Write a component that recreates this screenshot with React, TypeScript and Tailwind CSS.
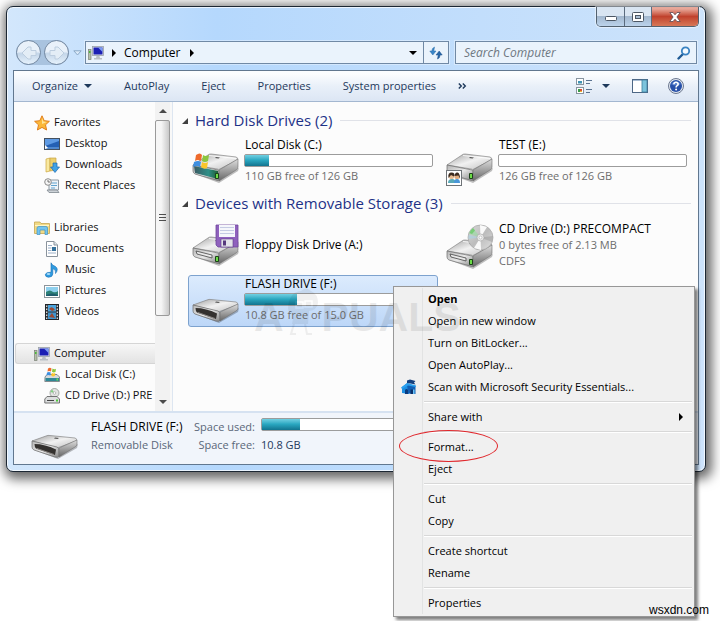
import type { ReactNode } from 'react';
import clsx from 'clsx';

type DriveKind = 'windows' | 'shared' | 'floppy' | 'cd' | 'flash';

/* ---------- drives ---------- */

function DriveBody({ kind }: { kind: DriveKind }) {
  return (
    <g>
      <path d="M3 24 27 33 46 21 47 18 28 29Z" fill="#000" opacity=".25" />
      <path d="M1 15 16 5Q17 4 19 4L44 7Q47 8 45 10L28 19Q27 20 25 19Z" fill="url(#driveTop)" stroke="#858585" strokeWidth=".7" />
      <path d="M1 15 26 20Q27 20 27 22V30Q26 31 24 30L3 24Q1 23 1 21Z" fill="url(#driveFront)" stroke="#6b6b6b" strokeWidth=".7" />
      <path d="M27 20 46 9V17Q46 19 44 20L27 31Z" fill="url(#driveSide)" stroke="#6f6f6f" strokeWidth=".6" />
      <path d="m24 7 4 .5-1.500 1-3.500-.5Z" fill="#555" />
      <path d="M17 5.500 44 8.500" stroke="#fff" strokeWidth="1" opacity=".8" />
      {kind === 'windows' && <path d="M2 16 26 21V29L3 23Z" fill="url(#driveTeal)" />}
      {(kind === 'cd' || kind === 'floppy') && (
        <path d="M4 18 20 22V25L5 21Z" fill="#e9e9e9" stroke="#444" strokeWidth=".8" />
      )}
      <rect x="23" y="23" width="4" height="6" rx="1" fill="#1c4318" />
      <rect x="24" y="24" width="2" height="4" fill="#6bdc46" />
    </g>
  );
}

function FlashBody() {
  return (
    <g>
      <path d="M3 37 27 46 46 35 47 31 28 42Z" fill="#000" opacity=".25" />
      <path d="M1 28 15 23Q17 22 19 22.500L44 25Q47 26 45 28L29 34Q27 35 25 34.500Z" fill="url(#driveTop)" stroke="#858585" strokeWidth=".7" />
      <path d="M1 28 26 34Q28 35 28 37V43Q27 45 24 44L3 37Q1 36 1 34Z" fill="url(#driveFront)" stroke="#6b6b6b" strokeWidth=".7" />
      <path d="M28 35 46 27V31Q46 33 44 34L28 44Z" fill="url(#driveSide)" stroke="#6f6f6f" strokeWidth=".6" />
      <path d="M3.500 31Q14 31 25 36.500L24 42 5 35.500Q3.500 34 3.500 31Z" fill="#34312f" />
      <path d="M6 35.500 23 41.500" stroke="#8a8683" strokeWidth="1" />
      <path d="m24 24.500 4 .5-1.500 1-3.500-.5Z" fill="#555" />
    </g>
  );
}

function DriveIcon({ kind, className }: { kind: DriveKind; className?: string }) {
  return (
    <svg viewBox="0 0 48 48" className={clsx('size-12 shrink-0', className)} aria-hidden="true">
      {kind === 'flash' ? (
        <FlashBody />
      ) : (
        <g transform={kind === 'cd' ? 'translate(0 15)' : 'translate(0 12)'}>
          <DriveBody kind={kind} />
        </g>
      )}
      {kind === 'windows' && (
        <g>
          <path d="M4 17Q8 14 10 17L9 23Q6 21 3 23Z" fill="#ee6a2c" />
          <path d="M11 17Q14 19 17 17L16 23Q13 25 10 23Z" fill="#8cc63e" />
          <path d="M2 24Q6 22 9 24L8 29Q5 27 1 29Z" fill="#3f8fe0" />
          <path d="M10 24Q13 26 16 24L15 30Q12 32 9 29Z" fill="#fbc62b" />
        </g>
      )}
      {kind === 'shared' && (
        <g>
          <rect x=".5" y="32.500" width="15" height="15" fill="#fff" stroke="#6f7478" />
          <path d="M2 45Q2 41 6 41T9 45Z" fill="#58a9b8" />
          <path d="M8 45Q8 41 11 41T14 45Z" fill="#4a96d8" />
          <circle cx="5.500" cy="38.500" r="2.600" fill="#e8bd93" />
          <circle cx="11" cy="38.500" r="2.600" fill="#e0ad80" />
          <path d="M2.500 40Q1.500 34.500 5.500 34.500T8 38.500L5 37ZM8.500 38Q9 34 11.500 34.500T14 41L12.500 37.500Z" fill="#3c2b1f" />
        </g>
      )}
      {kind === 'floppy' && (
        <g>
          <path d="M24 4H46V26H26L24 24Z" fill="#8f61bd" stroke="#6f479d" strokeWidth=".8" />
          <rect x="27" y="4" width="16" height="12" fill="#f5f6fb" />
          <path d="M28 6.500H42M28 9.500H42M28 12.500H42" stroke="#c5cbe4" />
          <rect x="29" y="18" width="12" height="8" fill="#e3e3e9" stroke="#5d3b88" strokeWidth=".6" />
          <rect x="31" y="19.500" width="3" height="5" fill="#56387d" />
        </g>
      )}
      {kind === 'cd' && (
        <g>
          <circle cx="34.500" cy="16.500" r="12.500" fill="url(#disc)" stroke="#a5a5a5" strokeWidth=".7" />
          <path d="M34.500 16.500 23 13Q24 9 27 7Z" fill="#9ed8a6" opacity=".7" />
          <path d="M23.500 12Q24.500 9 27 7L29 9.500 26 13Z" fill="#62c95e" opacity=".7" />
          <path d="M34.500 16.500 22.500 18V14Z" fill="#a9d3e6" opacity=".6" />
          <path d="M34.500 16.500 34 4 41 6Z" fill="#fff" opacity=".9" />
          <path d="M34.500 16.500 35 29 28 27Z" fill="#fff" opacity=".9" />
          <path d="M34.500 16.500 47 15 46 21Z" fill="#8f8f8f" opacity=".4" />
          <circle cx="34.500" cy="16.500" r="3.500" fill="#ededed" stroke="#aaa" strokeWidth=".7" />
          <circle cx="34.500" cy="16.500" r="1.500" fill="#fff" stroke="#aaa" strokeWidth=".6" />
        </g>
      )}
    </svg>
  );
}

// gradients shared by every drive drawing
function DriveGradients() {
  return (
    <svg className="absolute size-0" aria-hidden="true">
      <defs>
        <linearGradient id="driveTop" x1="0" x2="1" y1="0" y2="1">
          <stop offset="0" stopColor="#9d9d9d" />
          <stop offset=".5" stopColor="#f1f1f1" />
          <stop offset="1" stopColor="#c0c0c0" />
        </linearGradient>
        <linearGradient id="driveFront" x1="0" x2="1" y1="0" y2="1">
          <stop offset="0" stopColor="#b5b5b5" />
          <stop offset=".5" stopColor="#e8e8e8" />
          <stop offset="1" stopColor="#858585" />
        </linearGradient>
        <linearGradient id="driveSide" x1="0" x2="0" y1="0" y2="1">
          <stop offset="0" stopColor="#dedede" />
          <stop offset="1" stopColor="#666" />
        </linearGradient>
        <linearGradient id="driveTeal" x1="0" x2="1" y1="0" y2="0">
          <stop offset="0" stopColor="#3a5a62" />
          <stop offset=".6" stopColor="#2f8f88" />
          <stop offset="1" stopColor="#1d5d35" />
        </linearGradient>
        <linearGradient id="disc" x1="0" x2="1" y1="0" y2="1">
          <stop offset="0" stopColor="#d8d8d8" />
          <stop offset=".5" stopColor="#bdbdbd" />
          <stop offset="1" stopColor="#dedede" />
        </linearGradient>
      </defs>
    </svg>
  );
}

/* ---------- small icons ---------- */

function Icon16({ children }: { children: ReactNode }) {
  return (
    <svg viewBox="0 0 16 16" className="size-4 shrink-0" aria-hidden="true">
      {children}
    </svg>
  );
}

const StarIcon = () => (
  <Icon16>
    <path d="m8 .8 2.200 4.900 5.200.6-3.900 3.500 1.100 5.200L8 12.400 3.400 15l1.100-5.200L.6 6.300l5.200-.6Z" fill="#fbb83a" stroke="#e17f1c" />
    <path d="m8 3 1.300 3.500 3.500.5L8 9Z" fill="#fee49a" />
  </Icon16>
);

const DesktopIcon = () => (
  <Icon16>
    <rect x=".5" y="2.500" width="15" height="11" fill="#2460b4" stroke="#45515f" />
    <path d="M1 3H15V5L1 10Z" fill="#5f9be4" />
    <path d="M1 12H15" stroke="#7ab0e8" />
    <path d="M1 13V9L4 12Z" fill="#fff" />
  </Icon16>
);

const DownloadsIcon = () => (
  <Icon16>
    <path d="M2 2 6 1V14L2 15Z" fill="#f9e9a0" stroke="#cba63f" strokeWidth=".7" />
    <path d="M6 1H12V13L6 14Z" fill="#ecd06e" stroke="#c9a445" strokeWidth=".7" />
    <path d="M9 6H13V10H15.500L11 15.500 6.500 10H9Z" fill="#3fa2e6" stroke="#1c68ad" strokeWidth=".7" />
  </Icon16>
);

const RecentIcon = () => (
  <Icon16>
    <path d="M5 2H14.500V12H5Z" fill="#eef4f9" stroke="#8d99a3" />
    <path d="M7 5H13M7 7.500H13M7 10H11" stroke="#5fa3cf" />
    <path d="M3 12H13L15 14.500H5Z" fill="#cdd3d8" stroke="#7d868e" strokeWidth=".8" />
    <circle cx="4" cy="4" r="3.300" fill="#f5f5f5" stroke="#8b8b8b" />
    <path d="M4 2V4H6" stroke="#555" fill="none" strokeWidth=".8" />
  </Icon16>
);

const LibrariesIcon = () => (
  <Icon16>
    <path d="M.5 2H6L7 3.500H15.500V13.500H.5Z" fill="#f1da85" stroke="#c6a650" strokeWidth=".8" />
    <path d="M1 5.500H15" stroke="#fff5c6" />
    <path d="M3 14.500V8Q3 6.500 5 6.500H12Q13.500 6.500 13.500 8V14.500H11V10H6V14.500Z" fill="#74c4ee" stroke="#3d93c5" strokeWidth=".7" />
  </Icon16>
);

const DocumentsIcon = () => (
  <Icon16>
    <path d="M2.500.5H10L13.500 4V15.500H2.500Z" fill="#fff" stroke="#8a939c" />
    <path d="M10 .5V4H13.500" fill="#dfe5ea" stroke="#8a939c" />
    <path d="M4 4.500H8M4 7H7.500M4 9.500H7.500M4 12H12" stroke="#9db0c8" />
    <rect x="8" y="6" width="4" height="4" fill="#35719b" />
  </Icon16>
);

const MusicIcon = () => (
  <Icon16>
    <path d="M7 .8Q8 3.500 11.500 4.500 15 7 11.500 11.500 12.500 8 8.800 6.500V12Q8.500 15.200 4.500 15.300 1 15 1.300 12.300 2.500 9.800 7 10.300Z" fill="#2f9be0" stroke="#1a6fb4" strokeWidth=".6" />
    <ellipse cx="4.500" cy="12" rx="1.800" ry="1" fill="#a7dbf8" />
  </Icon16>
);

const PicturesIcon = () => (
  <Icon16>
    <rect x=".5" y="2.500" width="15" height="12" fill="#fff" stroke="#8c949b" />
    <rect x="2" y="4" width="12" height="9" fill="#8ed0ee" />
    <path d="M2 9Q6 6 9 9 12 10 14 8V13H2Z" fill="#2d8077" />
    <path d="M2 12Q8 9 14 12V13H2Z" fill="#1e5c6d" />
  </Icon16>
);

const VideosIcon = () => (
  <Icon16>
    <rect x="1.500" y=".5" width="13" height="15" fill="#2f3338" stroke="#22262a" />
    <rect x="4" y="1" width="8" height="6.500" fill="#4ba4dd" />
    <rect x="4" y="8.500" width="8" height="6.500" fill="#3f95cf" />
    <path d="M5 5Q8 1 11 6L8 7ZM5 13 8 9 11 14Z" fill="#9c4a33" />
    <path d="M2.700 1.500V15M13.300 1.500V15" stroke="#e8e8e8" strokeWidth="1.200" strokeDasharray="1.500 1.500" />
  </Icon16>
);

const ComputerIcon = () => (
  <Icon16>
    <rect x=".5" y="4.500" width="2.500" height="10" fill="#b6bfa9" stroke="#7a8175" strokeWidth=".7" />
    <rect x="1" y="6" width="1.500" height="2" fill="#4bbb3a" />
    <rect x="4.500" y="1.500" width="11" height="9" fill="#dfe3e8" stroke="#98a0a8" strokeWidth=".8" />
    <rect x="5.500" y="2.500" width="9" height="7" fill="#1b1fb4" />
    <path d="M10 2.500H14.500V7Z" fill="#7d9cf0" />
    <path d="M8.500 11H11.500L12 13H14V14.500H6V13H8Z" fill="#b9bfc5" />
  </Icon16>
);

const LocalDiskIcon = () => (
  <Icon16>
    <path d="M1 10 3 7.500H13L15.500 10V14.500H.8Z" fill="#d5d9dc" stroke="#6b7379" strokeWidth=".8" />
    <rect x="1.500" y="11" width="13.500" height="3" fill="#2f8896" />
    <rect x="12.500" y="11.500" width="1.500" height="2" fill="#6ede4a" />
    <path d="M4 1.500Q6 0 7.500 1.500L7 4.500Q5 3.500 3.500 4.500Z" fill="#ee6a2c" />
    <path d="M8.500 1.500Q10 3 12 1.800L11.500 5Q9.500 6 8 4.800Z" fill="#8cc63e" />
    <path d="M3 5.500Q5 4.500 6.800 5.500L6.300 8.500Q4.500 7.500 2.500 8.500Z" fill="#3f8fe0" />
    <path d="M7.800 5.800Q9.500 7 11.300 6L10.800 9Q9 10 7.300 8.800Z" fill="#fbc62b" />
  </Icon16>
);

const CdDriveIcon = () => (
  <Icon16>
    <circle cx="10.500" cy="5" r="4.500" fill="#e2e4e2" stroke="#8f9590" strokeWidth=".8" />
    <path d="M10.500 5 6.500 4 8 1.500Z" fill="#7fcf7f" />
    <circle cx="10.500" cy="5" r="1.300" fill="#fff" stroke="#999" strokeWidth=".6" />
    <path d="M.8 11 3 8.500H13L15.500 11V15H.8Z" fill="#dcdedf" stroke="#666" strokeWidth=".9" />
    <path d="M3 12.500H10" stroke="#444" />
    <rect x="12" y="11.500" width="2" height="2" fill="#4dc83a" />
  </Icon16>
);

function Caret({ className }: { className?: string }) {
  return (
    <svg viewBox="0 0 8 4" className={clsx('h-1 w-2 shrink-0', className)} aria-hidden="true">
      <path d="M0 0H8L4 4Z" fill="currentColor" />
    </svg>
  );
}

function RightArrow() {
  return (
    <svg viewBox="0 0 4 8" className="h-2 w-1 shrink-0" aria-hidden="true">
      <path d="M0 0 4 4 0 8Z" fill="#000" />
    </svg>
  );
}

/* ---------- window frame ---------- */

function TitleBar() {
  const glyph = 'flex h-[19px] items-center justify-center border-r border-[#5b6b7e]';
  return (
    <div className="flex h-[33px] items-start justify-end">
      <div className="flex overflow-hidden rounded-b-[5px] border border-t-0 border-[#52616f] shadow-[0_0_1px_1px_rgba(255,255,255,0.5)]">
        <button aria-label="Minimize" className={clsx(glyph, 'w-7 bg-linear-to-b from-[#d9e5f2] from-45% via-[#a3b8cf] via-50% to-[#bcd3eb]')}>
          <svg viewBox="0 0 12 5" className="mt-1 h-[5px] w-3">
            <rect x=".5" y=".5" width="11" height="4" rx="1" fill="#fff" stroke="#4c5764" />
          </svg>
        </button>
        <button aria-label="Maximize" className={clsx(glyph, 'w-[27px] bg-linear-to-b from-[#d9e5f2] from-45% via-[#a3b8cf] via-50% to-[#bcd3eb]')}>
          <svg viewBox="0 0 12 10" className="h-[10px] w-3">
            <rect x=".5" y=".5" width="11" height="9" rx="1" fill="#fff" stroke="#4c5764" />
            <rect x="3.500" y="3.500" width="5" height="3" fill="#a9bdd2" stroke="#4c5764" />
          </svg>
        </button>
        <button aria-label="Close" className="flex h-[19px] w-[46px] items-center justify-center bg-linear-to-b from-[#e7a799] from-10% via-[#c0412c] via-50% to-[#d77757]">
          <svg viewBox="0 0 12 10" className="h-[10px] w-3">
            <path d="M.8.5H4L6 2.800 8 .5H11.200L7.900 5 11.200 9.500H8L6 7.200 4 9.500H.8L4.100 5Z" fill="#fff" stroke="#5b4a52" strokeWidth=".8" />
          </svg>
        </button>
      </div>
    </div>
  );
}

function NavButtons() {
  return (
    <div className="flex items-center gap-1">
      <div className="flex items-center gap-[3px] rounded-full bg-[#a9c3df]">
        {['Back', 'Forward'].map((label) => (
          <button
            key={label}
            aria-label={label}
            className="flex size-[25px] items-center justify-center rounded-full border border-[#7388a1] bg-linear-to-b from-[#e9f1fa] from-45% via-[#c4d6e9] via-55% to-[#e6f2fc]"
          >
            <svg viewBox="0 0 16 14" className={clsx('h-[14px] w-4', label === 'Forward' && 'rotate-180')}>
              <path d="M1 7 7 1H10V4.500H15V9.500H10V13H7Z" fill="#e3edf6" stroke="#bccddf" />
            </svg>
          </button>
        ))}
      </div>
      <button aria-label="Recent pages">
        <svg viewBox="0 0 9 6" className="h-[6px] w-[9px]">
          <path d="M.8.8H8.200L4.500 5Z" fill="#dcebfa" stroke="#8ba8c6" />
        </svg>
      </button>
    </div>
  );
}

function AddressRow() {
  return (
    <div className="flex items-center gap-[6px] pb-[5px] pl-[3px] pr-[2px]">
      <div className="flex min-w-0 flex-1 items-center gap-[3px]">
        <NavButtons />
        <div className="flex h-[23px] min-w-0 flex-1 items-center border border-[#7089a5] bg-[#eaf3fc] shadow-[0_0_0_1px_rgba(255,255,255,0.35)]">
          <a href="#" className="flex flex-1 items-center pl-[2px] text-black">
            <ComputerIcon />
            <span className="ml-2">
              <RightArrow />
            </span>
            <span className="ml-2 mr-[9px] text-[12px]">Computer</span>
            <RightArrow />
          </a>
          <button aria-label="Previous locations" className="px-[6px] text-black">
            <Caret />
          </button>
          <button aria-label="Refresh" className="flex h-full w-[25px] items-center justify-center border-l border-[#7089a5]">
            <svg viewBox="0 0 14 14" className="size-[14px]">
              <path d="M5.500 1 4.800 5H7L3.800 9 .8 5H2.800Q3 2 5.500 1Z" fill="#3a86c8" stroke="#2b6cab" strokeWidth=".5" />
              <path d="M8.500 13 9.200 9H7L10.200 5 13.200 9H11.200Q11 12 8.500 13Z" fill="#2767a8" stroke="#1d4f8a" strokeWidth=".5" />
            </svg>
          </button>
        </div>
      </div>
      <label className="flex h-[23px] w-[242px] shrink-0 items-center border border-[#7089a5] bg-[#eaf3fc] pl-2 pr-[5px] shadow-[0_0_0_1px_rgba(255,255,255,0.35)]">
        <input
          type="search"
          aria-label="Search Computer"
          placeholder="Search Computer"
          className="min-w-0 flex-1 bg-transparent text-[12px] italic outline-none placeholder:text-[#6e7781]"
        />
        <svg viewBox="0 0 14 14" className="size-[14px]" aria-hidden="true">
          <path d="M6 8 1.500 12.500" stroke="#1f5a94" strokeWidth="2.400" strokeLinecap="round" />
          <circle cx="8.500" cy="5" r="3.700" fill="#f4faff" stroke="#3a83c2" strokeWidth="1.800" />
        </svg>
      </label>
    </div>
  );
}

function Toolbar() {
  return (
    <div className="flex h-[31px] items-center border-b border-[#a3b7d0] bg-linear-to-b from-[#fbfdff] from-10% via-[#e9f0f9] via-50% to-[#dce6f4] pl-[18px] pr-[14px] text-[#1e395b]">
      <div className="flex items-center gap-8">
        <button className="flex items-center gap-[6px]">
          Organize
          <Caret />
        </button>
        <button>AutoPlay</button>
        <button>Eject</button>
        <button>Properties</button>
        <button>System properties</button>
      </div>
      <button aria-label="More commands" className="ml-[22px]">
        <svg viewBox="0 0 9 6" className="h-[6px] w-[9px]">
          <path d="m.8.500 2.500 2.500L.8 5.500M4.800.5l2.500 2.500-2.500 2.500" fill="none" stroke="#1e395b" strokeWidth="1.400" />
        </svg>
      </button>
      <div className="ml-auto flex items-center">
        <button aria-label="Change your view" className="flex items-center gap-[10px]">
          <svg viewBox="0 0 16 16" className="size-4">
            <rect x=".5" y=".5" width="7" height="6" fill="#fff" stroke="#8894a0" />
            <rect x="2" y="3" width="4" height="2.500" fill="#3f93b5" />
            <rect x=".5" y="9.500" width="7" height="6" fill="#fff" stroke="#8894a0" />
            <rect x="2" y="11" width="2" height="3" fill="#3a9a46" />
            <rect x="4" y="11" width="2" height="2" fill="#db4c33" />
            <rect x="4" y="13" width="2" height="1" fill="#e9b82e" />
            <path d="M10 2.500H16M10 5.500H14M10 11.500H16M10 14.500H14" stroke="#5b7391" />
          </svg>
          <Caret />
        </button>
        <button aria-label="Show the preview pane" className="ml-[22px]">
          <svg viewBox="0 0 16 14" className="h-[14px] w-4">
            <rect x=".5" y=".5" width="15" height="13" fill="#fff" stroke="#4d6785" />
            <path d="M1 1.500H15" stroke="#a9bdd4" />
            <rect x="10" y="1" width="5" height="12" fill="#7cc3dc" stroke="#3f7f9d" strokeWidth=".8" />
          </svg>
        </button>
        <button aria-label="Get help" className="ml-5">
          <svg viewBox="0 0 16 16" className="size-4">
            <circle cx="8" cy="8" r="7.500" fill="#e1e7f0" stroke="#6c7890" />
            <circle cx="8" cy="8" r="6" fill="#2750a8" />
            <path d="M3 6Q8 .5 13 6 8 9 3 6Z" fill="#6c94dd" opacity=".7" />
            <path d="M5.900 6.300Q6 4.200 8 4.200T10.200 6.100Q10.200 7.200 8.900 7.900 8.100 8.400 8.100 9.500" fill="none" stroke="#fff" strokeWidth="1.600" />
            <circle cx="8.100" cy="11.600" r="1" fill="#fff" />
          </svg>
        </button>
      </div>
    </div>
  );
}

/* ---------- navigation pane ---------- */

const treeGroups = [
  {
    label: 'Favorites',
    icon: <StarIcon />,
    children: [
      { label: 'Desktop', icon: <DesktopIcon /> },
      { label: 'Downloads', icon: <DownloadsIcon /> },
      { label: 'Recent Places', icon: <RecentIcon /> },
    ],
  },
  {
    label: 'Libraries',
    icon: <LibrariesIcon />,
    children: [
      { label: 'Documents', icon: <DocumentsIcon /> },
      { label: 'Music', icon: <MusicIcon /> },
      { label: 'Pictures', icon: <PicturesIcon /> },
      { label: 'Videos', icon: <VideosIcon /> },
    ],
  },
  {
    label: 'Computer',
    icon: <ComputerIcon />,
    selected: true,
    children: [
      { label: 'Local Disk (C:)', icon: <LocalDiskIcon /> },
      { label: 'CD Drive (D:) PRE', icon: <CdDriveIcon /> },
    ],
  },
];

function NavigationPane() {
  return (
    <div className="flex w-[159px] shrink-0 border-r border-[#dde6f1] bg-[#fcfcfc]">
      <nav className="flex min-w-0 flex-1 flex-col gap-[21px] overflow-hidden pb-[5px] pl-px pt-[10px]">
        {treeGroups.map((group) => (
          <div key={group.label}>
            <a
              href="#"
              className={clsx(
                'flex h-[21px] items-center gap-1 border pl-[18px]',
                group.selected
                  ? 'rounded-l-[3px] border-r-0 border-[#d5d5d5] bg-linear-to-b from-[#f7f7f7] to-[#e3e3e3]'
                  : 'border-transparent',
              )}
            >
              {group.icon}
              {group.label}
            </a>
            {group.children.map((child) => (
              <a key={child.label} href="#" className="flex h-[21px] items-center gap-[5px] whitespace-nowrap pl-[29px]">
                {child.icon}
                {child.label}
              </a>
            ))}
          </div>
        ))}
      </nav>
      <div className="flex w-[15px] flex-col items-center bg-[#f2f2f2] text-[#4a4a4a]">
        <button aria-label="Scroll up" className="flex h-[18px] items-center">
          <Caret className="rotate-180" />
        </button>
        <div className="flex w-[15px] flex-10 flex-col items-center justify-center gap-[2px] rounded-[2px] border border-[#9a9a9a] bg-linear-to-r from-[#f6f6f6] from-40% to-[#c9c9c9]">
          <span className="h-px w-[7px] bg-[#4e4e4e]" />
          <span className="h-px w-[7px] bg-[#4e4e4e]" />
          <span className="h-px w-[7px] bg-[#4e4e4e]" />
        </div>
        <div className="flex-4" />
        <button aria-label="Scroll down" className="flex h-[18px] items-center">
          <Caret />
        </button>
      </div>
      <div className="w-[2px] bg-[#f8f8f8]" />
    </div>
  );
}

/* ---------- drive list ---------- */

function SpaceBar({ used }: { used: number }) {
  return (
    <div className="h-[13px] rounded-[2px] border border-[#9c9c9c] bg-white">
      {used > 0 && (
        <div
          className="h-full bg-linear-to-b from-[#6fd0e2] via-[#2ba9c2] via-45% to-[#12748f]"
          style={{ width: `${used}%` }}
        />
      )}
    </div>
  );
}

type Drive = { name: string; kind: DriveKind; used?: number; lines?: string[]; selected?: boolean };

function DriveTile({ name, kind, used, lines = [], selected }: Drive) {
  return (
    <div
      className={clsx(
        'flex h-[52px] items-center gap-1 rounded-[3px] border pl-[3px] pr-[4px]',
        selected ? 'border-[#7da2ce] bg-linear-to-b from-[#dcebfd] to-[#bdd7f8]' : 'border-transparent',
      )}
    >
      <DriveIcon kind={kind} />
      <div className={clsx('min-w-0 flex-1 leading-4', used !== undefined && 'self-start')}>
        <p className="truncate pl-px text-[12px] text-black">{name}</p>
        {used !== undefined && (
          <div className="py-px">
            <SpaceBar used={used} />
          </div>
        )}
        {lines.map((line) => (
          <p key={line} className="pl-px text-[#6d6d6d]">
            {line}
          </p>
        ))}
      </div>
    </div>
  );
}

function DriveGroup({ title, drives }: { title: string; drives: Drive[] }) {
  return (
    <section className="mb-1">
      <h2 className="mb-1 flex h-[23px] items-center pl-[9px] text-[15px] text-[#1e3287]">
        <svg viewBox="0 0 6 6" className="mr-[7px] size-[6px]" aria-hidden="true">
          <path d="M6 0V6H0Z" fill="#404040" />
        </svg>
        {title}
        <span className="ml-2 mr-[7px] h-px flex-1 bg-[#e0e2e8]" />
      </h2>
      <div className="grid grid-cols-2 gap-1 pl-[15px] pr-[6px]">
        {drives.map((drive) => (
          <DriveTile key={drive.name} {...drive} />
        ))}
      </div>
    </section>
  );
}

const hardDisks: Drive[] = [
  { name: 'Local Disk (C:)', kind: 'windows', used: 13, lines: ['110 GB free of 126 GB'] },
  { name: 'TEST (E:)', kind: 'shared', used: 0, lines: ['126 GB free of 126 GB'] },
];

const removable: Drive[] = [
  { name: 'Floppy Disk Drive (A:)', kind: 'floppy' },
  { name: 'CD Drive (D:) PRECOMPACT', kind: 'cd', lines: ['0 bytes free of 2.13 MB', 'CDFS'] },
  { name: 'FLASH DRIVE (F:)', kind: 'flash', used: 28, lines: ['10.8 GB free of 15.0 GB'], selected: true },
];

function DetailsPane() {
  return (
    <footer className="flex h-[53px] items-start border-t-2 border-[#d6e2f1] bg-[#f1f5fb] pl-[17px] leading-[18px] text-[#5a6779]">
      <DriveIcon kind="flash" />
      <div className="ml-3 mt-[5px] w-[102px] whitespace-nowrap">
        <p className="text-[12px] text-black">FLASH DRIVE (F:)</p>
        <p>Removable Disk</p>
      </div>
      <dl className="mt-[5px] grid flex-1 grid-cols-[62px_1fr] gap-x-[6px]">
        <dt className="text-right">Space used:</dt>
        <dd className="w-[190px]">
          <SpaceBar used={20} />
        </dd>
        <dt className="text-right">Space free:</dt>
        <dd className="text-[#1e395b]">10.8 GB</dd>
      </dl>
    </footer>
  );
}

/* ---------- context menu ---------- */

const menuGroups = [
  ['Open', 'Open in new window', 'Turn on BitLocker...', 'Open AutoPlay...', 'Scan with Microsoft Security Essentials...'],
  ['Share with'],
  ['Format...', 'Eject'],
  ['Cut', 'Copy'],
  ['Create shortcut', 'Rename'],
  ['Properties'],
];

function SecurityIcon() {
  return (
    <svg viewBox="0 0 16 16" className="size-4" aria-hidden="true">
      <path d="M1 8 6 4 8 7V15L1 14Z" fill="#1c8fe3" />
      <path d="M6 4.500 14.500 7V15L7 14.500Z" fill="#1260b4" />
      <path d="M0 8.500 6.500 4 15 6.500V8L7 6.500 1 10Z" fill="#2aa0ee" />
      <path d="M6 1.500 9 .5 14.500 2 13 3.500 14.500 5.500 9.500 4.500 6 4Z" fill="#14407f" />
      <path d="M4 15V11Q5.500 9 7 11V15Z" fill="#0b3b7e" />
      <path d="M9.500 15V10.500H12V15Z" fill="#0a2f68" />
      <path d="M12 15V10.500H13.500V15Z" fill="#69c2f7" />
    </svg>
  );
}

function ContextMenu() {
  return (
    <div
      role="menu"
      className="absolute left-[393px] top-[286px] w-[302px] border border-[#979797] bg-[#f0f0f0] px-[2px] pt-px pb-[2px] text-black shadow-[3px_3px_3px_rgba(0,0,0,0.5)]"
    >
      {menuGroups.map((items, index) => (
        <div key={items[0]} role="group">
          {index > 0 && (
            <div className="flex h-2">
              <span className="w-[27px] border-r border-[#e2e3e3]" />
              <span className="ml-px mt-[3px] h-[2px] flex-1 border-t border-[#d8d8d8] bg-white" />
            </div>
          )}
          {items.map((item) => (
            <button key={item} role="menuitem" className="flex h-[22px] w-full items-center text-left">
              <span className="flex h-full w-[27px] items-center justify-center border-r border-[#e2e3e3]">
                {item.startsWith('Scan') && <SecurityIcon />}
              </span>
              <span className={clsx('flex-1 pl-[5px]', item === 'Open' && 'font-bold')}>{item}</span>
              {item === 'Share with' && (
                <span className="mr-[9px]">
                  <RightArrow />
                </span>
              )}
            </button>
          ))}
        </div>
      ))}
      {/* ring around Format... */}
      <span className="pointer-events-none absolute left-[5px] top-[143px] h-8 w-[99px] rounded-[50%] border border-[#e0282d]" />
    </div>
  );
}

function Watermark() {
  return (
    <div
      aria-hidden="true"
      className="pointer-events-none absolute left-[254px] top-[293px] flex items-center font-['Liberation_Sans',sans-serif] text-[41px] leading-[48px] font-bold text-black opacity-8"
    >
      A
      <svg viewBox="0 0 38 50" className="-mt-3 h-[50px] w-[38px] opacity-70">
        <path d="M4 22Q5 6 17 5 22 0 27 5 34 8 34 17 33 24 25 25L24 38H8L10 28Q4 27 4 22Z" fill="currentColor" />
        <path d="M12 16H19V22H12ZM21 15H28V21H21Z" fill="none" stroke="#fff" strokeWidth="1.500" />
        <path d="M10 38 7 48H12M21 38 23 48H28" fill="none" stroke="currentColor" strokeWidth="2" />
      </svg>
      PUALS
    </div>
  );
}

export default function App() {
  return (
    <div className="relative min-h-screen overflow-hidden bg-white font-['Open_Sans','Noto_Sans',sans-serif] text-[11px] text-[#111]">
      <DriveGradients />
      <div className="pl-[6px] pr-[14px] pt-[6px]">
        <div className="rounded-[7px] border border-[#1c2733] bg-[#b8d9fb] bg-linear-to-r from-[#d3e7fc] via-[#b5d8fd] via-30% to-[#cde3fb] px-[6px] pb-[6px] shadow-[2px_3px_12px_4px_rgba(0,0,0,0.6),inset_0_0_0_1px_rgba(255,255,255,0.7)]">
          <TitleBar />
          <AddressRow />
          <div className="border border-[#61778f]">
            <Toolbar />
            <div className="flex">
              <NavigationPane />
              <main className="min-w-0 flex-1 bg-[#fcfcfc] pt-[7px]">
                <DriveGroup title="Hard Disk Drives (2)" drives={hardDisks} />
                <DriveGroup title="Devices with Removable Storage (3)" drives={removable} />
              </main>
            </div>
            <DetailsPane />
          </div>
        </div>
      </div>
      <ContextMenu />
      <Watermark />
      <p className="absolute bottom-[2px] right-[11px] font-['Liberation_Sans',sans-serif] text-[12px] text-black">wsxdn.com</p>
    </div>
  );
}
